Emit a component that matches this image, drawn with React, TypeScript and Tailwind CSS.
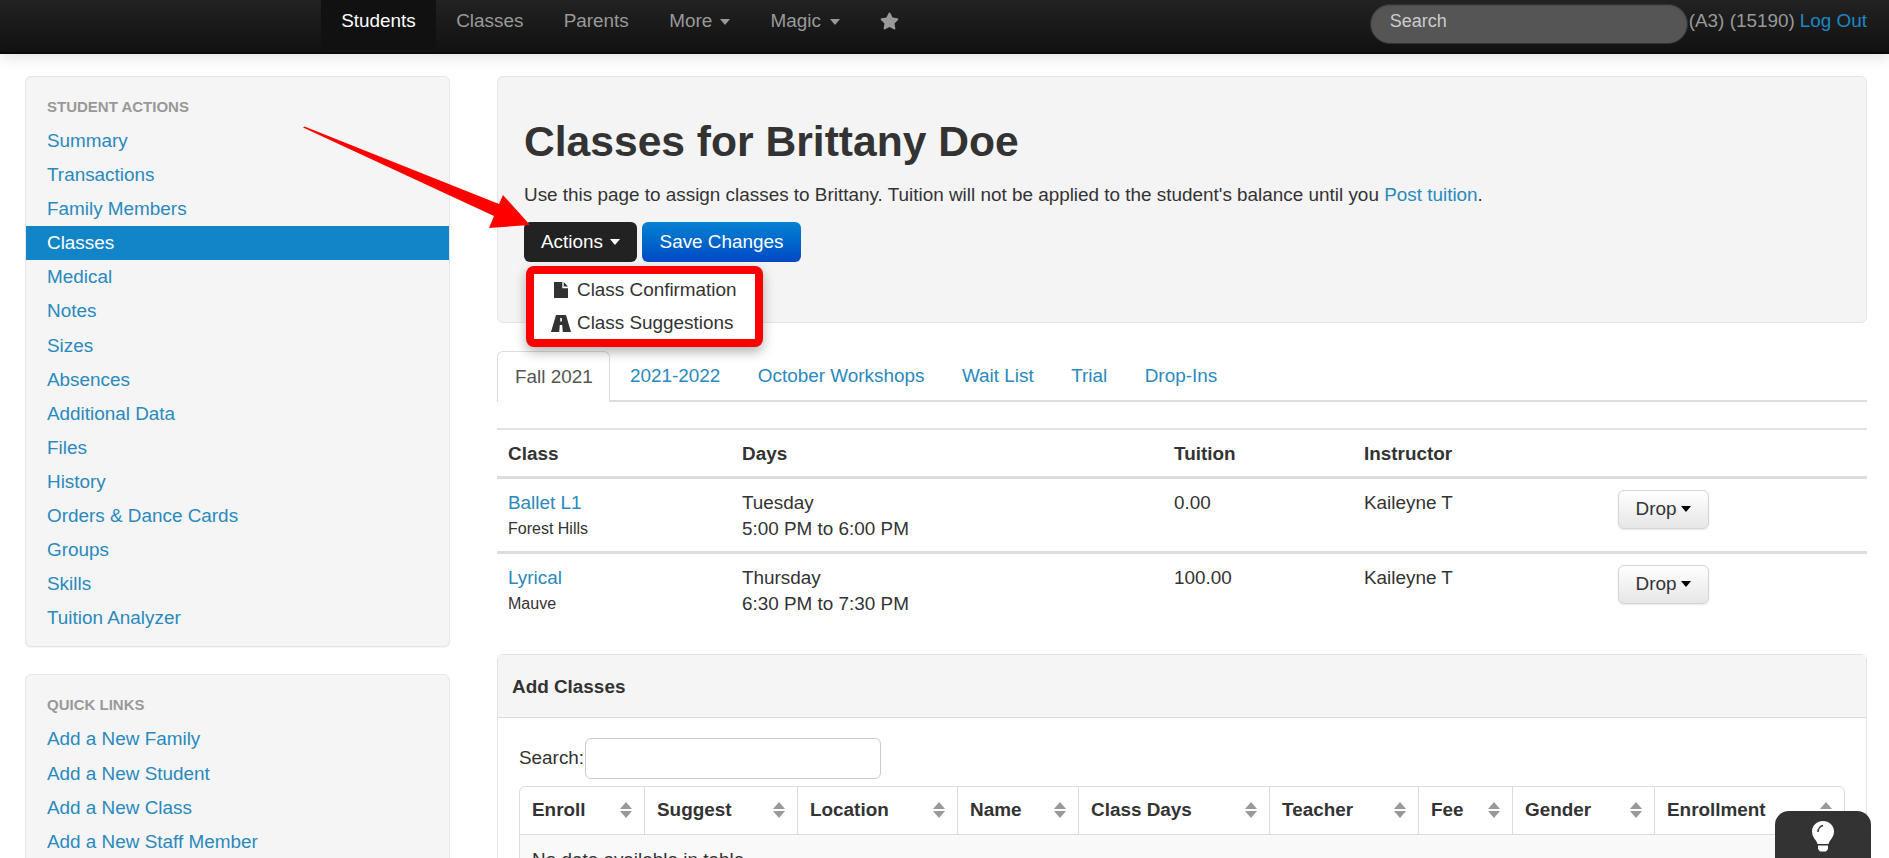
import { FaStar } from "react-icons/fa";

const studentActions = [
  "Summary",
  "Transactions",
  "Family Members",
  "Classes",
  "Medical",
  "Notes",
  "Sizes",
  "Absences",
  "Additional Data",
  "Files",
  "History",
  "Orders & Dance Cards",
  "Groups",
  "Skills",
  "Tuition Analyzer",
];
const quickLinks = ["Add a New Family", "Add a New Student", "Add a New Class", "Add a New Staff Member"];
const tabs = ["2021-2022", "October Workshops", "Wait List", "Trial", "Drop-Ins"];
const enrolled = [
  { name: "Ballet L1", place: "Forest Hills", day: "Tuesday", time: "5:00 PM to 6:00 PM", fee: "0.00" },
  { name: "Lyrical", place: "Mauve", day: "Thursday", time: "6:30 PM to 7:30 PM", fee: "100.00" },
];
const addColumns = [
  { label: "Enroll", width: "w-[124px]" },
  { label: "Suggest", width: "w-[153px]" },
  { label: "Location", width: "w-[160px]" },
  { label: "Name", width: "w-[121px]" },
  { label: "Class Days", width: "w-[191px]" },
  { label: "Teacher", width: "w-[149px]" },
  { label: "Fee", width: "w-[94px]" },
  { label: "Gender", width: "w-[142px]" },
  { label: "Enrollment", width: "w-[190px]" },
];

function SideList({ title, items, active }: { title: string; items: string[]; active?: string }) {
  return (
    <div className="bg-[#f5f5f5] border border-[#e6e6e6] rounded-md pt-[13px] pb-[11px] shadow-[0_1px_1px_rgba(0,0,0,0.05)]">
      <div className="h-[34px] leading-[34px] px-[21px] text-[15px] font-bold text-[#999999] uppercase">{title}</div>
      {items.map((item) => (
        <div
          key={item}
          className={
            item === active
              ? "h-[34.1px] leading-[34px] px-[21px] bg-[#1285c8] text-white"
              : "h-[34.1px] leading-[34px] px-[21px] text-[#2a89bd]"
          }
        >
          {item}
        </div>
      ))}
    </div>
  );
}

function SortIcon() {
  return (
    <span className="flex flex-col gap-[2px] shrink-0">
      <span className="w-0 h-0 border-x-[6px] border-x-transparent border-b-[7px] border-b-[#999999]" />
      <span className="w-0 h-0 border-x-[6px] border-x-transparent border-t-[7px] border-t-[#999999]" />
    </span>
  );
}

function DropButton() {
  return (
    <button className="flex items-center justify-center gap-[5px] w-[91px] h-[39px] rounded-md border border-[#d5d5d5] bg-linear-to-b from-white to-[#e6e6e6] text-[#333333] shadow-[0_1px_2px_rgba(0,0,0,0.1)]">
      Drop
      <span className="w-0 h-0 border-x-[5px] border-x-transparent border-t-[6px] border-t-black" />
    </button>
  );
}

function FileIcon() {
  return (
    <svg width="14" height="16" viewBox="0 0 14 16" fill="#333333">
      <path d="M0 0H8.300V6.200H14V16H0z" />
      <path d="M9.700 0L14 4.600H9.700z" />
    </svg>
  );
}

function RoadIcon() {
  return (
    <svg width="20" height="17" viewBox="0 0 20 17" fill="#333333">
      <path d="M5 0H15L20 17H0zM9.200 3V6.500H10.800V3zM8.800 10L8.200 17H11.800L11.200 10z" fillRule="evenodd" />
    </svg>
  );
}

export default function App() {
  return (
    <div className="relative h-[858px] overflow-hidden bg-white text-[18.9px] text-[#333333] font-['Liberation_Sans',sans-serif]">
      <nav className="relative z-10 flex items-stretch h-[54px] pl-[321px] pr-[22px] bg-linear-to-b from-[#222222] to-[#111111] border-b-2 border-[#0a0a0a] shadow-[0_3px_14px_rgba(0,0,0,0.12)]">
        <div className="flex items-center px-[20.2px] pb-[9px] bg-[#111111] text-white">Students</div>
        <div className="flex items-center px-[20.2px] pb-[9px] text-[#999999]">Classes</div>
        <div className="flex items-center px-[20.2px] pb-[9px] text-[#999999]">Parents</div>
        <div className="flex items-center gap-[8px] px-[20.2px] pb-[9px] text-[#999999]">
          More
          <span className="w-0 h-0 border-x-[5px] border-x-transparent border-t-[6px] border-t-[#999999]" />
        </div>
        <div className="flex items-center gap-[9px] px-[20.2px] pb-[9px] text-[#999999]">
          Magic
          <span className="w-0 h-0 border-x-[5px] border-x-transparent border-t-[6px] border-t-[#999999]" />
        </div>
        <div className="flex items-center pl-[20px] pb-[9px] text-[#999999]">
          <FaStar className="w-[19px] h-[18px] -mt-[2px]" />
        </div>
        <div className="flex items-center ml-auto pb-[5px]">
          <input
            readOnly
            placeholder="Search"
            className="w-[318px] h-[40px] px-[19px] pb-[4px] rounded-[20px] bg-[#555555] border border-[#333333] text-[#cccccc] placeholder:text-[#cccccc] shadow-[inset_0_1px_2px_rgba(0,0,0,0.1)] text-[18px]"
          />
          <span className="ml-[1px] -mt-[5px] text-[#999999]">(A3) (15190) </span>
          <span className="ml-[5px] -mt-[4px] text-[#1d87c4]">Log Out</span>
        </div>
      </nav>

      <div className="flex gap-[47px] pl-[25px] pr-[22px] pt-[22px]">
        <aside className="flex flex-col gap-[27px] w-[425px] shrink-0">
          <SideList title="Student Actions" items={studentActions} active="Classes" />
          <SideList title="Quick Links" items={quickLinks} />
        </aside>

        <main className="flex-1 min-w-0">
          <section className="h-[247px] pl-[26px] pt-[39px] bg-[#f4f4f4] border border-[#e6e6e6] rounded-md">
            <h1 className="text-[42.6px] leading-[50px] font-bold">Classes for Brittany Doe</h1>
            <p className="mt-[16px] leading-[25px]">
              Use this page to assign classes to Brittany. Tuition will not be applied to the student's balance until you{" "}
              <span className="text-[#2a89bd]">Post tuition</span>.
            </p>
            <div className="relative flex gap-[5px] mt-[15px]">
              <button className="flex items-center justify-center gap-[7px] w-[113px] h-[40px] rounded-md bg-[#222222] text-white">
                Actions
                <span className="w-0 h-0 border-x-[5px] border-x-transparent border-t-[6px] border-t-white" />
              </button>
              <button className="w-[159px] h-[40px] rounded-md bg-linear-to-b from-[#0a82d2] to-[#0548c4] text-white">
                Save Changes
              </button>
              <div className="absolute z-20 left-[2px] top-[44px] w-[237px] h-[81px] bg-white border-[8px] border-[#ff0000] rounded-lg shadow-[0_5px_12px_rgba(0,0,0,0.3)]">
                <div className="flex items-center h-[32px]">
                  <span className="flex justify-center w-[43px] pl-[11px]">
                    <FileIcon />
                  </span>
                  Class Confirmation
                </div>
                <div className="flex items-center h-[34px]">
                  <span className="flex justify-center w-[43px] pl-[11px]">
                    <RoadIcon />
                  </span>
                  Class Suggestions
                </div>
              </div>
            </div>
          </section>

          <div className="flex h-[51px] mt-[28px] border-b-2 border-[#dddddd]">
            <div className="h-[51px] w-[113px] pl-[17px] leading-[50px] bg-white border border-b-0 border-[#dddddd] rounded-t-md text-[#555555]">
              Fall 2021
            </div>
            <div className="flex pl-[20px] gap-[37.5px] leading-[50px] text-[#2a89bd]">
              {tabs.map((tab) => (
                <span key={tab}>{tab}</span>
              ))}
            </div>
          </div>

          <table className="w-full table-fixed mt-[26px] border-t-2 border-[#e3e3e3]">
            <colgroup>
              <col className="w-[234px]" />
              <col className="w-[432px]" />
              <col className="w-[190px]" />
              <col className="w-[254px]" />
              <col />
            </colgroup>
            <thead>
              <tr className="h-[48px] text-left">
                <th className="pl-[11px] pt-[2px] font-bold">Class</th>
                <th className="pl-[11px] pt-[2px] font-bold">Days</th>
                <th className="pl-[11px] pt-[2px] font-bold">Tuition</th>
                <th className="pl-[11px] pt-[2px] font-bold">Instructor</th>
                <th />
              </tr>
            </thead>
            <tbody>
              {enrolled.map((row) => (
                <tr key={row.name} className="h-[75px] border-t-[3px] border-[#dddddd] align-top">
                  <td className="pl-[11px] pt-[11px] leading-[25px]">
                    <div className="text-[#2a89bd]">{row.name}</div>
                    <div className="text-[16px] leading-[28px]">{row.place}</div>
                  </td>
                  <td className="pl-[11px] pt-[11px] leading-[26px]">
                    <div>{row.day}</div>
                    <div>{row.time}</div>
                  </td>
                  <td className="pl-[11px] pt-[11px] leading-[25px]">{row.fee}</td>
                  <td className="pl-[11px] pt-[11px] leading-[25px]">Kaileyne T</td>
                  <td className="pl-[11px] pt-[11px]">
                    <DropButton />
                  </td>
                </tr>
              ))}
            </tbody>
          </table>

          <section className="mt-[27px] border border-[#e3e3e3] rounded-t-md">
            <div className="h-[63px] pl-[14px] leading-[64px] font-bold bg-[#f5f5f5] border-b border-[#dddddd]">Add Classes</div>
            <div className="pl-[21px] pr-[21px]">
              <div className="flex items-center h-[41px] mt-[20px]">
                <span className="w-[66px]">Search:</span>
                <input readOnly className="w-[296px] h-[41px] bg-white border border-[#cccccc] rounded-md" />
              </div>
              <table className="w-[1325px] table-fixed mt-[7px] border-separate border-spacing-0 border border-[#dddddd] rounded-t-md">
                <colgroup>
                  {addColumns.map((col) => (
                    <col key={col.label} className={col.width} />
                  ))}
                </colgroup>
                <thead>
                  <tr className="h-[48px]">
                    {addColumns.map((col, index) => (
                      <th
                        key={col.label}
                        className={
                          index === 0
                            ? "px-3 font-bold text-left border-b border-[#dddddd]"
                            : "px-3 font-bold text-left border-b border-l border-[#dddddd]"
                        }
                      >
                        <span className="flex items-center justify-between">
                          {col.label}
                          <SortIcon />
                        </span>
                      </th>
                    ))}
                  </tr>
                </thead>
                <tbody>
                  <tr>
                    <td colSpan={9} className="px-3 py-3 leading-[25px] bg-[#f9f9f9]">
                      No data available in table
                    </td>
                  </tr>
                </tbody>
              </table>
            </div>
          </section>
        </main>
      </div>

      {/* hand-drawn annotation arrow */}
      <svg className="absolute z-20 left-[300px] top-[120px]" width="240" height="115" viewBox="300 120 240 115">
        <polygon points="303,127.500 304.500,126.500 499,204 503,195 530,225 489,228 494,216" fill="#ff0000" />
      </svg>

      <div className="absolute z-30 right-[18px] top-[811px] flex justify-center w-[96px] h-[60px] pt-[10px] bg-[#333333] rounded-t-[14px]">
        <svg width="22" height="32" viewBox="0 0 22 32">
          <path d="M11 0C5 0 0 4.600 0 10.500c0 4 2 6.500 3.500 8.500 1.200 1.600 1.800 3 2 4h11c.2-1 .8-2.400 2-4C20 17 22 14.500 22 10.500 22 4.600 17 0 11 0z" fill="#ffffff" />
          <path d="M6 11C6 7.500 8.500 5 11 4.500" stroke="#333333" strokeWidth="1.500" fill="none" />
          <path d="M6 24.500h10v3.500l-2 2.500H8l-2-2.500z" fill="#ffffff" />
        </svg>
      </div>
    </div>
  );
}
